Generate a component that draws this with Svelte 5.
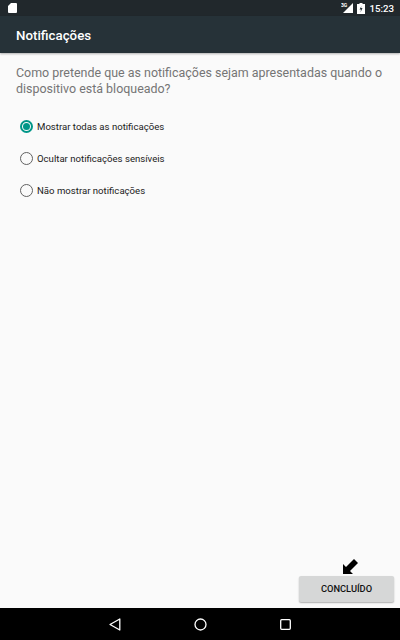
<script>
  const options = [
    { label: 'Mostrar todas as notificações', checked: true },
    { label: 'Ocultar notificações sensíveis', checked: false },
    { label: 'Não mostrar notificações', checked: false }
  ];
</script>

<div class="screen">
  <div class="status">
    <svg class="sd" width="9" height="10" viewBox="0 0 9 10"><path d="M3 0H8a1 1 0 0 1 1 1V9a1 1 0 0 1-1 1H1a1 1 0 0 1-1-1V3z" fill="#fff"/></svg>
    <div class="status-right">
      <svg class="signal" width="13" height="12" viewBox="0 0 13 12">
        <path d="M12 1V11H2z" fill="#fff"/>
        <text x="0" y="4.500" class="net">3G</text>
      </svg>
      <svg class="battery" width="8" height="11" viewBox="0 0 8 11">
        <path d="M2.500 0H5.500V1H8V11H0V1H2.500z" fill="#fff"/>
        <path d="M4.500 3L2.500 6.500H4L3.500 9.500L5.500 5H4z" fill="#263238"/>
      </svg>
      <span class="time">15:23</span>
    </div>
  </div>
  <header class="toolbar">Notificações</header>

  <main class="content">
    <p class="question">Como pretende que as notificações sejam apresentadas quando o dispositivo está bloqueado?</p>
    <div class="options">
      {#each options as opt}
        <div class="option">
          <span class="radio" class:checked={opt.checked}></span>
          <span>{opt.label}</span>
        </div>
      {/each}
    </div>
  </main>

  <div class="footer">
    <svg class="arrow" width="15" height="15" viewBox="0 0 15 15">
      <path d="M0 15V5L3 8L11 0L15 4L7 12L10 15z" fill="#000"/>
    </svg>
    <button class="done">CONCLUÍDO</button>
  </div>

  <nav class="navbar">
    <svg width="12" height="13" viewBox="0 0 12 13"><path d="M10.800 1L1 6.500L10.800 12z" fill="none" stroke="#fff" stroke-width="1.300" stroke-linejoin="round"/></svg>
    <svg width="13" height="13" viewBox="0 0 13 13"><circle cx="6.500" cy="6.500" r="5.500" fill="none" stroke="#fff" stroke-width="1.300"/></svg>
    <svg width="11" height="11" viewBox="0 0 11 11"><rect x="0.700" y="0.700" width="9.600" height="9.600" rx="1" fill="none" stroke="#fff" stroke-width="1.300"/></svg>
  </nav>
</div>

<style>
  :global(body) {
    margin: 0;
  }
  .screen {
    width: 400px;
    height: 640px;
    display: flex;
    flex-direction: column;
    background: #fafafa;
    font-family: Roboto, "Liberation Sans", sans-serif;
    overflow: hidden;
  }
  .status {
    height: 16px;
    flex: none;
    background: #21282c;
    display: flex;
    align-items: center;
    justify-content: space-between;
    padding: 0 6px 0 8px;
  }
  .sd {
    display: block;
  }
  .status-right {
    display: flex;
    align-items: center;
    gap: 3px;
  }
  .net {
    font-size: 5px;
    font-weight: 700;
    fill: #fff;
  }
  .time {
    color: #fff;
    font-size: 9.700px;
    font-weight: 500;
    margin-left: 1px;
  }
  .toolbar {
    height: 37px;
    flex: none;
    box-sizing: border-box;
    background: #263238;
    color: #fff;
    font-size: 13.300px;
    font-weight: 500;
    padding: 12px 0 0 16px;
    box-shadow: 0 1px 2px rgba(0, 0, 0, 0.3);
  }
  .content {
    flex: 1;
    padding: 12px 16px 0;
  }
  .question {
    margin: 0;
    font-size: 12.450px;
    line-height: 16px;
    color: #757575;
  }
  .options {
    margin-top: 19px;
    display: flex;
    flex-direction: column;
    gap: 12px;
    padding-left: 4px;
  }
  .option {
    height: 20px;
    display: flex;
    align-items: center;
    gap: 4px;
    font-size: 9.600px;
    color: #212121;
  }
  .radio {
    width: 13px;
    height: 13px;
    box-sizing: border-box;
    border: 1.500px solid #616161;
    border-radius: 50%;
    display: flex;
    align-items: center;
    justify-content: center;
  }
  .radio.checked {
    border: 2px solid #009688;
  }
  .radio.checked::after {
    content: "";
    width: 7px;
    height: 7px;
    border-radius: 50%;
    background: #009688;
  }
  .footer {
    position: relative;
    flex: none;
    height: 50px;
    display: flex;
    justify-content: flex-end;
    align-items: flex-end;
    padding: 0 6px 6px 0;
  }
  .arrow {
    position: absolute;
    left: 343px;
    top: 7px;
  }
  .done {
    width: 95px;
    height: 26px;
    border: none;
    border-radius: 2px;
    background: #d6d7d7;
    box-shadow: 0 1px 1.500px rgba(0, 0, 0, 0.3);
    font-family: inherit;
    font-size: 9.300px;
    font-weight: 500;
    color: #111;
    padding: 0 0 2px;
  }
  .navbar {
    height: 32px;
    flex: none;
    background: #000;
    display: flex;
    align-items: center;
    justify-content: center;
    gap: 73px;
  }
</style>
